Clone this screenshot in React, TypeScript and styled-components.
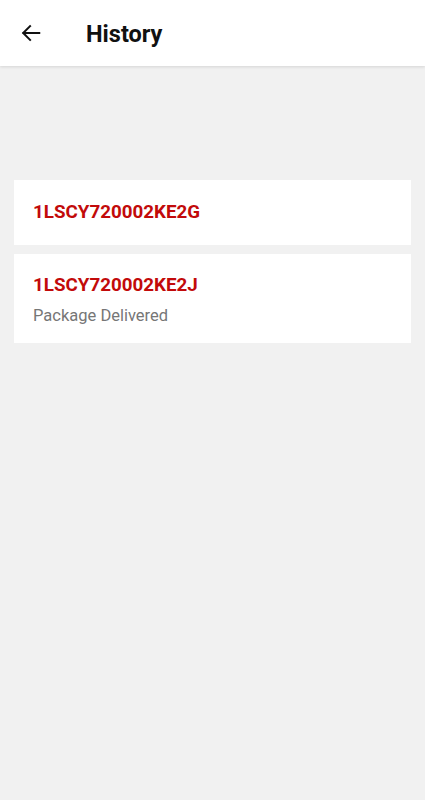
import styled, { createGlobalStyle } from 'styled-components'

const GlobalStyle = createGlobalStyle`
  html, body {
    margin: 0;
    padding: 0;
    background-color: #f1f1f1;
    font-family: Roboto, 'Noto Sans', sans-serif;
  }
`

const Page = styled('div')`
  min-height: 800px;
  background-color: #f1f1f1;
`

const Header = styled('header')`
  height: 66px;
  background-color: #ffffff;
  display: flex;
  align-items: center;
  box-shadow: 0 1px 3px rgba(0, 0, 0, 0.12);
  position: relative;
  z-index: 1;
`

const BackButton = styled('button')`
  width: 62px;
  height: 66px;
  border: none;
  background: none;
  padding: 0 0 0 20px;
  display: flex;
  align-items: center;
  cursor: pointer;
`

const Title = styled('h1')`
  margin: 2px 0 0 24px;
  font-size: 23.5px;
  font-weight: 700;
  color: #111111;
`

const List = styled('div')`
  padding: 114px 14px 0;
  display: flex;
  flex-direction: column;
  gap: 9px;
`

const Card = styled('div')<{ $tall?: boolean }>`
  background-color: #ffffff;
  padding: ${({ $tall }) => ($tall ? '19px 19px 17px' : '20px 19px 21px')};
  display: flex;
  flex-direction: column;
  gap: 9px;
`

const TrackingNo = styled('div')`
  font-size: 18.8px;
  font-weight: 700;
  color: #c20a0a;
  line-height: 24px;
`

const Status = styled('div')`
  font-size: 16.5px;
  color: #767676;
  line-height: 20px;
`

const items = [
  { id: '1LSCY720002KE2G', status: '' },
  { id: '1LSCY720002KE2J', status: 'Package Delivered' },
]

const App = () => {
  return (
    <Page>
      <GlobalStyle />
      <Header>
        <BackButton aria-label="Back">
          <svg width="22" height="22" viewBox="0 0 24 24" fill="none" stroke="#111" strokeWidth="2.2" strokeLinecap="square">
            <path d="M21 12H4" />
            <path d="M11 4.5 3.5 12l7.5 7.5" />
          </svg>
        </BackButton>
        <Title>History</Title>
      </Header>
      <List>
        {items.map(({ id, status }) => (
          <Card key={id} $tall={!!status}>
            <TrackingNo>{id}</TrackingNo>
            {status && <Status>{status}</Status>}
          </Card>
        ))}
      </List>
    </Page>
  )
}

export default App
